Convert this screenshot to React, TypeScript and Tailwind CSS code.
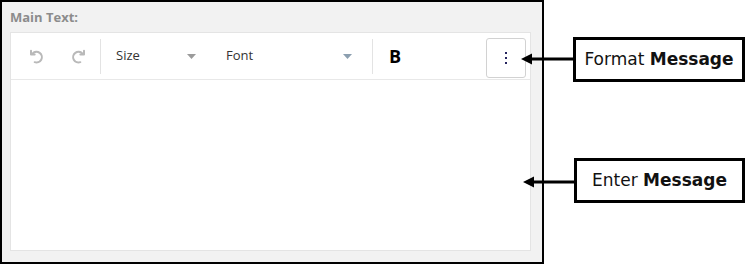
import { ReactNode } from "react";

const UI_FONT = { fontFamily: '"Open Sans", "Liberation Sans", sans-serif' };
const CALLOUT_FONT = { fontFamily: '"DejaVu Sans", "Liberation Sans", sans-serif' };

function UndoIcon({ flip = false }: { flip?: boolean }) {
  return (
    <svg
      width="16"
      height="15"
      viewBox="0 0 24 22"
      fill="none"
      stroke="#b9b9b9"
      strokeWidth="3"
      strokeLinecap="round"
      strokeLinejoin="round"
      className={flip ? "-scale-x-100" : ""}
    >
      <path d="M5.5 6.5 A8 8 0 1 1 8.5 19.5" />
      <path d="M3 2.5 v5.5 h5.5" />
    </svg>
  );
}

function Caret({ color }: { color: string }) {
  return (
    <svg width="9" height="5" viewBox="0 0 9 5">
      <path d="M0 0 H9 L4.5 5 Z" fill={color} />
    </svg>
  );
}

function Divider() {
  return <div className="h-[35px] w-px bg-[#e3e3e3]" />;
}

function Dropdown({ label, width, caret }: { label: string; width: string; caret: string }) {
  return (
    <div className={`flex items-center justify-between pl-[15px] pr-[15px] ${width}`}>
      <span className="text-[13px] text-[#333]">{label}</span>
      <Caret color={caret} />
    </div>
  );
}

function Callout({ children, className }: { children: ReactNode; className: string }) {
  return (
    <div
      className={`flex items-center justify-center border-[3px] border-black bg-white text-[17px] text-[#111] ${className}`}
      style={CALLOUT_FONT}
    >
      {children}
    </div>
  );
}

export default function App() {
  return (
    <div className="relative flex h-[264px] w-[747px] bg-white" style={UI_FONT}>
      <div className="flex h-[264px] w-[544px] flex-col border-2 border-black bg-[#f2f2f2] pl-[8px] pt-[6px]">
        <div className="h-[18px] text-[13px] font-bold leading-[18px] text-[#8c8c8c]">Main Text:</div>
        <div className="mt-[6px] flex h-[219px] w-[521px] flex-col border border-[#e4e4e4] bg-white">
          <div className="flex h-[47px] items-center border-b border-[#e8e8e8] pl-[5px] pr-[4px]">
            <button type="button" className="flex h-[35px] w-[41px] items-center justify-center">
              <UndoIcon />
            </button>
            <button type="button" className="flex h-[35px] w-[41px] items-center justify-center">
              <UndoIcon flip />
            </button>
            <div className="ml-[2px]">
              <Divider />
            </div>
            <Dropdown label="Size" width="w-[110px]" caret="#9b9b9b" />
            <Dropdown label="Font" width="w-[156px]" caret="#8c9fb0" />
            <div className="ml-[5px]">
              <Divider />
            </div>
            <span className="ml-[16px] text-[18px] font-bold text-black">B</span>
            <button
              type="button"
              className="mb-auto ml-auto mt-[5px] flex h-[40px] w-[40px] flex-col items-center justify-center gap-[3px] rounded-[3px] border border-[#d2d2d2]"
            >
              <span className="h-[2px] w-[2px] bg-[#26245e]" />
              <span className="h-[2px] w-[2px] bg-[#26245e]" />
              <span className="h-[2px] w-[2px] bg-[#26245e]" />
            </button>
          </div>
          <div className="flex-1" />
        </div>
      </div>

      <div className="flex flex-1 flex-col items-end pr-[2px] pt-[37px]">
        <Callout className="h-[45px] w-[172px]">
          <span>
            Format <b>Message</b>
          </span>
        </Callout>
        <Callout className="mt-[76px] h-[45px] w-[171px]">
          <span>
            Enter <b>Message</b>
          </span>
        </Callout>
      </div>

      <svg className="pointer-events-none absolute left-0 top-0" width="747" height="264">
        <line x1="530" y1="59" x2="574" y2="59" stroke="black" strokeWidth="3" />
        <path d="M521 59 L532 53.5 L532 64.5 Z" fill="black" />
        <line x1="532" y1="182" x2="575" y2="182" stroke="black" strokeWidth="3" />
        <path d="M523 182 L534 176.5 L534 187.5 Z" fill="black" />
      </svg>
    </div>
  );
}
